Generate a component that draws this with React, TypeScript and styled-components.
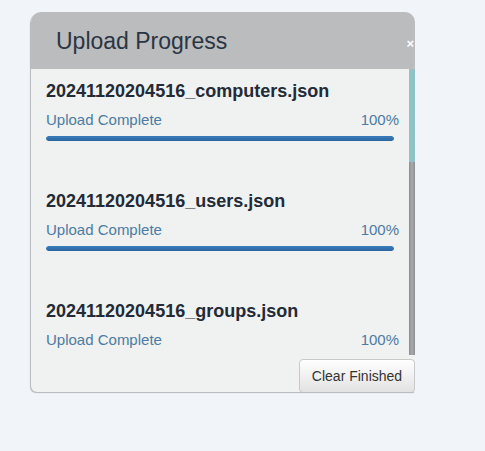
import React from "react";
import styled, { createGlobalStyle } from "styled-components";

const Global = createGlobalStyle`
  html, body { margin: 0; padding: 0; background: #f1f4f9; }
  body { font-family: "Liberation Sans", Arial, sans-serif; }
`;

const Page = styled.div`
  padding: 12px 0 0 31px;
  height: 439px;
`;

const Panel = styled.div`
  width: 384px;
  height: 380px;
  background: #f0f1f1;
  border-radius: 10px 10px 0 6px;
  overflow: hidden;
  display: flex;
  flex-direction: column;
  box-shadow: -1px 1px 1px rgba(0, 0, 0, 0.25);
`;

const Header = styled.div`
  height: 57px;
  flex: none;
  background: #bbbcbd;
  display: flex;
  align-items: center;
  justify-content: space-between;
  padding: 0 1px 0 25px;
`;

const Title = styled.h3`
  margin: 0;
  font-size: 23px;
  font-weight: 400;
  color: #2a3543;
  position: relative;
  top: 1px;
`;

const Close = styled.span`
  color: #ffffff;
  font-size: 13px;
  font-weight: 700;
  margin-top: 6px;
`;

const Body = styled.div`
  height: 286px;
  display: flex;
  flex: none;
`;

const List = styled.div`
  flex: 1;
  overflow: hidden;
`;

const Scrollbar = styled.div`
  width: 6px;
  display: flex;
  flex-direction: column;
  background: linear-gradient(90deg, #8d8e92, #a9aaae 50%, #8d8e92);
`;

const Thumb = styled.div`
  height: 93px;
  background: #8fc3c7;
`;

const Item = styled.div`
  padding: 11px 10px 38px 15px;
`;

const FileName = styled.div`
  font-size: 18px;
  line-height: 22px;
  font-weight: 700;
  color: #222b36;
`;

const StatusRow = styled.div`
  margin-top: 9px;
  display: flex;
  justify-content: space-between;
  font-size: 15px;
  line-height: 18px;
  color: #4b7ca3;
`;

const Track = styled.div`
  margin: 7px 5px 0 0;
  height: 5px;
  border-radius: 3px;
  background: #e4e6e8;
  overflow: hidden;
`;

const Fill = styled.div`
  height: 100%;
  border-radius: 3px;
  background: linear-gradient(180deg, #3a7dbb, #2a65a0);
`;

const Footer = styled.div`
  flex: 1;
  display: flex;
  justify-content: flex-end;
  align-items: flex-start;
  padding-top: 4px;
`;

const Button = styled.button`
  width: 116px;
  height: 34px;
  font-family: "Liberation Sans", Arial, sans-serif;
  font-size: 14px;
  color: #333;
  background: linear-gradient(180deg, #ffffff, #e2e2e2);
  border: 1px solid #c8c8c8;
  border-radius: 4px;
  padding: 0;
`;

const files = [
  "20241120204516_computers.json",
  "20241120204516_users.json",
  "20241120204516_groups.json",
];

export default function App() {
  return (
    <>
      <Global />
      <Page>
        <Panel>
          <Header>
            <Title>Upload Progress</Title>
            <Close>×</Close>
          </Header>
          <Body>
            <List>
              {files.map((f) => (
                <Item key={f}>
                  <FileName>{f}</FileName>
                  <StatusRow>
                    <span>Upload Complete</span>
                    <span>100%</span>
                  </StatusRow>
                  <Track>
                    <Fill style={{ width: "100%" }} />
                  </Track>
                </Item>
              ))}
            </List>
            <Scrollbar>
              <Thumb />
            </Scrollbar>
          </Body>
          <Footer>
            <Button>Clear Finished</Button>
          </Footer>
        </Panel>
      </Page>
    </>
  );
}
